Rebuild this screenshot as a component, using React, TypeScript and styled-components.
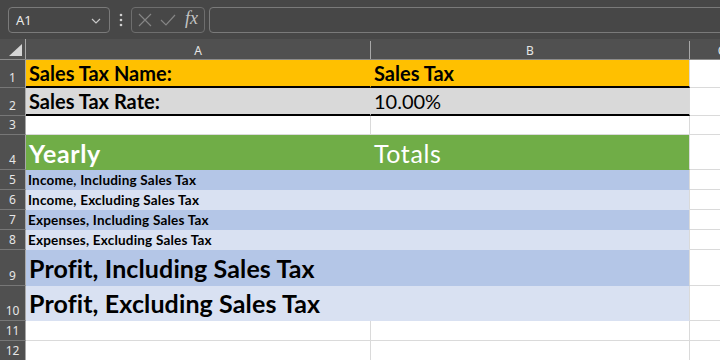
import React from "react";
import styled, { createGlobalStyle } from "styled-components";

const GlobalStyle = createGlobalStyle`
  html, body {
    margin: 0;
    padding: 0;
    background: #ffffff;
    overflow: hidden;
  }
  * { box-sizing: border-box; }
`;

const GRID = "#dadada";
const COLS = "26px 345px 319px 64px";
const CELL_FONT = `Lato, "Noto Sans", sans-serif`;
const UI_FONT = `"Noto Sans", "Open Sans", sans-serif`;

type Fill = "orange" | "gray" | "green" | "blueDark" | "blueLight" | undefined;

const FILLS: Record<string, string> = {
  orange: "#ffc000",
  gray: "#d9d9d9",
  green: "#70ad47",
  blueDark: "#b4c6e7",
  blueLight: "#d9e1f2",
};

type RowSpec = {
  n: number;
  h: number;
  fill?: Fill;
  thick?: boolean;
  size?: number;
  pad?: number;
  track?: number;
  indent?: number;
  a?: string;
  b?: string;
  aBold?: boolean;
  bBold?: boolean;
  light?: boolean;
};

const rows: RowSpec[] = [
  { n: 1, h: 28, fill: "orange", thick: true, size: 20, pad: 3, a: "Sales Tax Name:", b: "Sales Tax", aBold: true, bBold: true },
  { n: 2, h: 28, fill: "gray", thick: true, size: 20, pad: 3, a: "Sales Tax Rate:", b: "10.00%", aBold: true },
  { n: 3, h: 19 },
  { n: 4, h: 35, fill: "green", size: 25, pad: 3, track: 0.6, a: "Yearly", b: "Totals", aBold: true, light: true },
  { n: 5, h: 20, fill: "blueDark", size: 13.5, pad: 2, track: 0.2, indent: 2, a: "Income, Including Sales Tax", aBold: true },
  { n: 6, h: 20, fill: "blueLight", size: 13.5, pad: 2, track: 0.2, indent: 2, a: "Income, Excluding Sales Tax", aBold: true },
  { n: 7, h: 20, fill: "blueDark", size: 13.5, pad: 2, track: 0.2, indent: 2, a: "Expenses, Including Sales Tax", aBold: true },
  { n: 8, h: 20, fill: "blueLight", size: 13.5, pad: 2, track: 0.2, indent: 2, a: "Expenses, Excluding Sales Tax", aBold: true },
  { n: 9, h: 36, fill: "blueDark", size: 25, pad: 4, track: 0.12, a: "Profit, Including Sales Tax", aBold: true },
  { n: 10, h: 35, fill: "blueLight", size: 25, pad: 4, track: 0.12, a: "Profit, Excluding Sales Tax", aBold: true },
  { n: 11, h: 20 },
  { n: 12, h: 20 },
];

export default function App() {
  return (
    <Window>
      <GlobalStyle />
      <Toolbar>
        <NameBox>
          <span>A1</span>
          <svg width="10" height="6" viewBox="0 0 10 6">
            <path d="M1 1 L5 5 L9 1" fill="none" stroke="#c8c8c8" strokeWidth="1.2" />
          </svg>
        </NameBox>
        <Dots>
          <svg width="4" height="14" viewBox="0 0 4 14">
            <circle cx="2" cy="2" r="1.3" fill="#cfcfcf" />
            <circle cx="2" cy="7" r="1.3" fill="#cfcfcf" />
            <circle cx="2" cy="12" r="1.3" fill="#cfcfcf" />
          </svg>
        </Dots>
        <FxGroup>
          <svg width="14" height="14" viewBox="0 0 14 14">
            <path d="M1 1 L13 13 M13 1 L1 13" stroke="#858585" strokeWidth="1.2" fill="none" />
          </svg>
          <svg width="16" height="12" viewBox="0 0 16 12">
            <path d="M1 6 L6 11 L15 1" stroke="#858585" strokeWidth="1.2" fill="none" />
          </svg>
          <Fx>fx</Fx>
        </FxGroup>
        <Formula />
      </Toolbar>

      <Sheet>
        <HeaderRow>
          <Corner>
            <svg width="13" height="12" viewBox="0 0 13 12">
              <path d="M13 0 L13 12 L0 12 Z" fill="#d6d6d6" />
            </svg>
          </Corner>
          <ColHead>A</ColHead>
          <ColHead>B</ColHead>
          <ColHead>C</ColHead>
        </HeaderRow>

        {rows.map((r) => {
          const fill = r.fill ? FILLS[r.fill] : undefined;
          return (
            <Row key={r.n} $h={r.h}>
              <RowHead>{r.n}</RowHead>
              <Cell
                $fill={fill}
                $thick={r.thick}
                $joined={!!fill}
                $size={r.size}
                $pad={r.pad}
                $track={r.track}
                $indent={r.indent}
                $bold={r.aBold}
                $light={r.light}
              >
                {r.a}
              </Cell>
              <Cell
                $fill={fill}
                $thick={r.thick}
                $size={r.size}
                $pad={r.pad}
                $track={r.track}
                $bold={r.bBold}
                $light={r.light}
              >
                {r.b}
              </Cell>
              <Cell />
            </Row>
          );
        })}
      </Sheet>
    </Window>
  );
}

const Window = styled.div`
  width: 720px;
  height: 360px;
  overflow: hidden;
  background: #ffffff;
`;

const Toolbar = styled.div`
  height: 39px;
  background: #474747;
  display: flex;
  align-items: center;
  padding-left: 8px;
  padding-top: 1px;
`;

const NameBox = styled.div`
  width: 102px;
  height: 26px;
  border: 1px solid #7a7a7a;
  border-radius: 4px;
  display: flex;
  align-items: center;
  justify-content: space-between;
  padding: 0 8px 0 7px;
  color: #eaeaea;
  font-family: ${UI_FONT};
  font-size: 13px;
  svg { margin-top: 1px; }
`;

const Dots = styled.div`
  width: 21px;
  display: flex;
  justify-content: center;
  align-items: center;
`;

const FxGroup = styled.div`
  width: 74px;
  height: 26px;
  border: 1px solid #6e6e6e;
  border-radius: 4px;
  display: flex;
  align-items: center;
  gap: 8px;
  padding-left: 6px;
`;

const Fx = styled.span`
  font-family: "Liberation Serif", "DejaVu Serif", serif;
  font-style: italic;
  font-size: 18px;
  color: #c4c4c4;
  margin-left: 1px;
  margin-top: -3px;
`;

const Formula = styled.div`
  flex: 1;
  height: 26px;
  margin-left: 4px;
  margin-right: -6px;
  border: 1px solid #7a7a7a;
  border-radius: 4px;
`;

const Sheet = styled.div`
  width: 754px;
`;

const HeaderRow = styled.div`
  height: 21px;
  display: grid;
  grid-template-columns: ${COLS};
  background: #505050;
  border-bottom: 1px solid #8c8c8c;
`;

const Corner = styled.div`
  border-right: 1px solid #a8a8a8;
  display: flex;
  align-items: flex-end;
  justify-content: flex-end;
  padding: 0 3px 3px 0;
`;

const ColHead = styled.div`
  border-right: 1px solid #a8a8a8;
  margin: 2px 0 0;
  display: flex;
  align-items: center;
  justify-content: center;
  color: #e6e6e6;
  font-family: ${UI_FONT};
  font-size: 12px;
  padding-top: 1px;
`;

const Row = styled.div<{ $h: number }>`
  height: ${(p) => p.$h}px;
  display: grid;
  grid-template-columns: ${COLS};
`;

const RowHead = styled.div`
  background: #505050;
  border-right: 1px solid #a8a8a8;
  border-bottom: 1px solid #777777;
  display: flex;
  align-items: flex-end;
  justify-content: center;
  padding-bottom: 2px;
  color: #e6e6e6;
  font-family: ${UI_FONT};
  font-size: 12px;
  line-height: 14px;
`;

const Cell = styled.div<{
  $fill?: string;
  $thick?: boolean;
  $joined?: boolean;
  $size?: number;
  $pad?: number;
  $track?: number;
  $indent?: number;
  $bold?: boolean;
  $light?: boolean;
}>`
  background: ${(p) => p.$fill ?? "#ffffff"};
  border-right: 1px solid ${(p) => (p.$joined ? p.$fill : GRID)};
  border-bottom: ${(p) =>
    p.$thick ? "2px solid #000000" : `1px solid ${p.$fill ?? GRID}`};
  display: flex;
  align-items: flex-end;
  padding: 0 0 ${(p) => p.$pad ?? 2}px ${(p) => p.$indent ?? 3}px;
  overflow: hidden;
  white-space: nowrap;
  font-family: ${CELL_FONT};
  font-size: ${(p) => p.$size ?? 14}px;
  letter-spacing: ${(p) => p.$track ?? 0}px;
  line-height: 1;
  font-weight: ${(p) => (p.$bold ? 700 : 400)};
  color: ${(p) => (p.$light ? "#ffffff" : "#000000")};
`;
